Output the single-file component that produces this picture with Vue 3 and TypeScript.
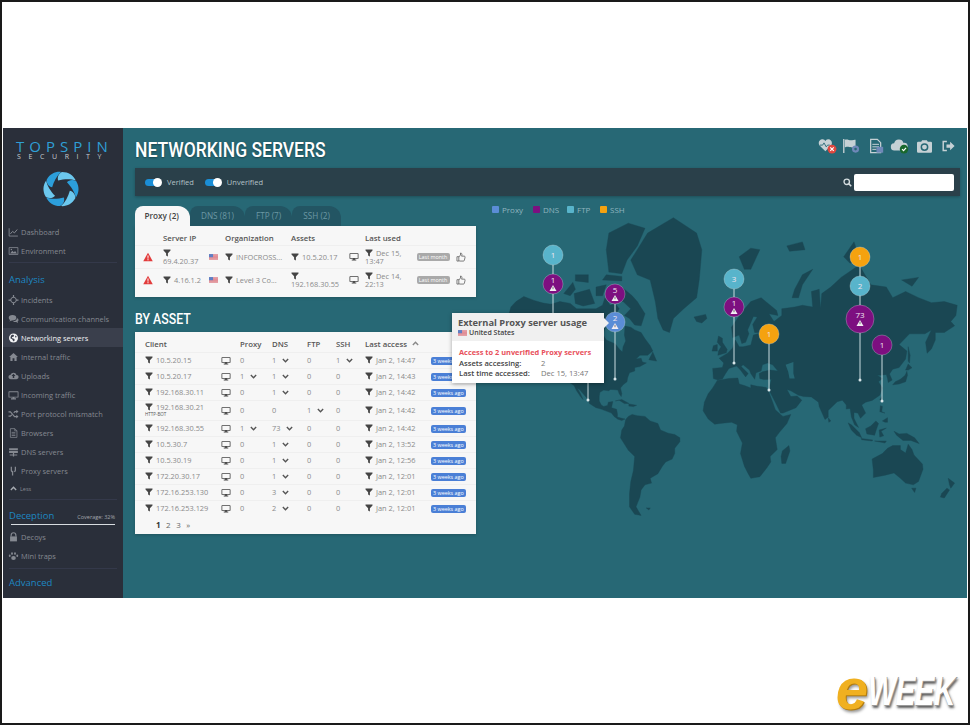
<script setup lang="ts">
// sidebar
const topNav = [
  { label: 'Dashboard', icon: 'chart' },
  { label: 'Environment', icon: 'image' }
]
const analysisNav = [
  { label: 'Incidents', icon: 'target' },
  { label: 'Communication channels', icon: 'comments' },
  { label: 'Networking servers', icon: 'globe', active: true },
  { label: 'Internal traffic', icon: 'home' },
  { label: 'Uploads', icon: 'upload' },
  { label: 'Incoming traffic', icon: 'monitor' },
  { label: 'Port protocol mismatch', icon: 'random' },
  { label: 'Browsers', icon: 'file' },
  { label: 'DNS servers', icon: 'dns' },
  { label: 'Proxy servers', icon: 'fork' }
]
const deceptionNav = [
  { label: 'Decoys', icon: 'lock' },
  { label: 'Mini traps', icon: 'paw' }
]

const tabs = ['Proxy (2)', 'DNS (81)', 'FTP (7)', 'SSH (2)']

const proxyRows = [
  { ip: '69.4.20.37', org: 'INFOCROSS...', asset: '10.5.20.17', used: 'Dec 15, 13:47', wrapIp: true, wrapAsset: false },
  { ip: '4.16.1.2', org: 'Level 3 Co...', asset: '192.168.30.55', used: 'Dec 14, 22:13', wrapIp: false, wrapAsset: true }
]

const assetRows = [
  { ip: '10.5.20.15', proxy: 0, dns: 1, ftp: 0, ssh: 1, time: 'Jan 2, 14:47' },
  { ip: '10.5.20.17', proxy: 1, dns: 1, ftp: 0, ssh: 0, time: 'Jan 2, 14:43' },
  { ip: '192.168.30.11', proxy: 0, dns: 1, ftp: 0, ssh: 0, time: 'Jan 2, 14:42' },
  { ip: '192.168.30.21', tag: 'HTTP-BOT', proxy: 0, dns: 0, ftp: 1, ssh: 0, time: 'Jan 2, 14:42' },
  { ip: '192.168.30.55', proxy: 1, dns: 73, ftp: 0, ssh: 0, time: 'Jan 2, 14:42' },
  { ip: '10.5.30.7', proxy: 0, dns: 1, ftp: 0, ssh: 0, time: 'Jan 2, 13:52' },
  { ip: '10.5.30.19', proxy: 0, dns: 1, ftp: 0, ssh: 0, time: 'Jan 2, 12:56' },
  { ip: '172.20.30.17', proxy: 0, dns: 1, ftp: 0, ssh: 0, time: 'Jan 2, 12:01' },
  { ip: '172.16.253.130', proxy: 0, dns: 3, ftp: 0, ssh: 0, time: 'Jan 2, 12:01' },
  { ip: '172.16.253.129', proxy: 0, dns: 2, ftp: 0, ssh: 0, time: 'Jan 2, 12:01' }
]

const legend = [
  { label: 'Proxy', color: '#5b8dd6', gap: 'w-proxy' },
  { label: 'DNS', color: '#7d0f80', gap: 'w-dns' },
  { label: 'FTP', color: '#58b4cb', gap: 'w-ftp' },
  { label: 'SSH', color: '#f5a20f', gap: 'w-ssh' }
]

// coastlines as lon,lat pairs, projected to page pixels (mercator fitted to the reference)
type Coast = number[][]
const project = (c: Coast) =>
  c
    .map(([lon, lat]) => {
      const y = Math.log(Math.tan(Math.PI / 4 + (lat * Math.PI) / 360))
      return `${(725 + 1.29 * lon).toFixed(1)},${(430 - 74 * y).toFixed(1)}`
    })
    .join(' ')

const coasts: Coast[] = [
  // north america
  [[-168,65.5],[-166,68.5],[-162,70],[-156,71.3],[-148,70.3],[-141,69.6],[-135,69.3],[-128,70],[-120,69.5],[-115,68],[-108,68],[-100,68],[-95,69],[-93,71],[-89,69],[-85,69.5],[-82,68],[-87,65],[-93,62],[-94.5,59],[-92,57],[-85,55.3],[-82,53],[-79.5,51.5],[-79,54],[-77,56.5],[-78,59],[-77.5,62.4],[-73,62],[-70,61],[-65,60],[-62,57.5],[-58,54.5],[-56,52],[-60,50],[-66,50],[-69,48],[-65,48.5],[-64,46.5],[-61,46],[-66,44],[-70,43.5],[-70,41.5],[-74,40.5],[-75.5,37.5],[-76,35],[-79,33],[-81,31],[-80,27],[-80.5,25],[-82,27],[-83,29.5],[-85,29.7],[-89,30],[-90,29],[-94,29.5],[-97,28],[-97.5,25],[-97.5,22],[-96,19],[-94,18],[-91,18.7],[-90.5,21],[-87,21.5],[-88,17],[-84,15.8],[-83.3,12],[-83.5,10],[-80,9],[-77.5,8.5],[-80,7.3],[-83,8.3],[-86,10.5],[-88,13],[-92,14.5],[-96,16],[-100,17],[-105,20],[-106,23],[-109,26],[-112.5,29.5],[-114.5,31],[-112,27],[-110,23],[-112,25],[-115,29],[-117,32.5],[-120.5,34.5],[-122.5,37.5],[-124,40.5],[-124,46],[-123,49],[-128,52],[-131,55],[-135,58.5],[-140,60],[-146,60.8],[-151,60],[-154,58],[-160,55.5],[-163,55],[-158,58.5],[-162,59],[-165,61],[-165,63.5],[-161,64.5]],
  // canadian arctic, newfoundland, caribbean
  [[-80,73.5],[-72,71.5],[-68,70],[-62,66.5],[-65,62.5],[-70,62.8],[-74,65],[-78,66],[-73,68],[-79,70],[-88,70.5],[-90,73]],
  [[-117,72],[-105,73],[-101,69.5],[-110,68.8],[-116,69.5]],
  [[-125,72],[-118,74.5],[-116,73],[-120,71.5]],
  [[-90,76.5],[-80,76.2],[-76,78.5],[-68,80.5],[-62,82.5],[-75,83],[-90,82],[-92,80]],
  [[-95,75],[-80,74.8],[-80,75.7],[-92,76]],
  [[-116,76],[-106,76],[-106,74.5],[-116,74.8]],
  [[-100,73.5],[-92,74],[-95,71.5],[-100,71.5]],
  [[-87,65],[-80.5,64],[-84,62.5]],
  [[-59,47.7],[-56,51.5],[-53,47]],
  [[-85,22],[-80,23],[-74.5,20.2],[-78,20],[-82,22.5]],
  [[-74.5,19.8],[-68.5,18.8],[-71,17.8],[-74.5,18.2]],
  // greenland
  [[-73,78.5],[-68,80],[-60,82],[-40,83.5],[-22,82],[-18,80],[-20,75],[-22,71],[-32,68],[-40,65],[-43,60],[-48,61],[-52,65],[-54,70],[-58,75],[-68,76]],
  // south america
  [[-72,12],[-68,11],[-62,10.5],[-58,7],[-52,5],[-50,0],[-44,-2.5],[-39,-3.5],[-35,-6],[-35,-9],[-39,-14],[-39,-18],[-41,-22],[-46,-24],[-48.5,-27],[-52,-32],[-58,-35],[-57,-38],[-62,-39],[-65,-42],[-66,-46],[-69,-51],[-65,-55],[-70,-54.5],[-74,-51],[-74,-44],[-73,-37],[-71,-30],[-70,-20],[-75,-15.5],[-81,-6],[-80,0],[-78,3],[-77,8],[-75,10.5]],
  [[-61,-51.5],[-58,-51.5],[-59,-52.5]],
  // africa
  [[-6,35.8],[3,37],[10,37.3],[11,33.5],[15,32.5],[20,31],[20,33],[25,32],[32,31.3],[34,28],[37,21],[39,15.5],[43,12],[45,10.5],[51,12],[48,5],[42,-2],[39,-6],[40.5,-15],[35,-20],[35.5,-24],[32.5,-28],[27,-34],[20,-35],[18,-32],[15,-27],[12,-18],[13.5,-10],[9,-1],[9.5,4],[5,6],[-4,5],[-8,4.5],[-13,8.5],[-17,14.7],[-16,21],[-13,27],[-9.5,31]],
  [[49.5,-12],[50.3,-16],[47,-25],[44,-25],[43.5,-20],[44.5,-16]],
  // eurasia
  [[-9,37],[-9.5,43],[-2,43.5],[-1,46],[-4.5,48.5],[2,51],[6,53.5],[8,57],[11,54],[14,54],[20,54.8],[22,59],[29,60],[23,60],[21.5,63],[25,65.5],[22,65.7],[17.5,61],[18.5,59.5],[16,56],[13,55.5],[11,59],[6,58],[5,62],[13,67],[20,70],[28,71],[40,67.5],[41,66],[34,66.5],[38,64],[44,66],[44,68],[54,68.5],[60,69],[68,68.5],[67,72.5],[73,73],[74,68],[75,72],[82,73.5],[90,75.5],[104,77.7],[113,74],[125,73.5],[130,71],[140,72.5],[150,71],[160,69.7],[170,70],[180,69],[179,66],[175,64],[178,62.5],[170,60],[163,60],[163,57],[160,53],[156.7,51],[155.5,56],[160,61],[155,59.5],[143,59.5],[135,55],[141,52],[140,48],[135,43.5],[130,42.5],[127.5,39.7],[129.5,36],[126.5,34.5],[126,37],[125,39.5],[121,39],[118,39],[122,37],[119,35],[122,31],[120,26],[114,22.3],[109,21],[106,19],[109,13],[105,9],[103,13],[100,13.5],[100,9],[103.5,2],[100.5,4],[98,10],[97,16.5],[94,16],[94,19],[91,22.5],[87,21.3],[80,15],[80,10],[77.5,8],[73,18],[72.5,21],[67,24.8],[61,25],[57,26],[51,29],[48,30],[51,25],[56,25.5],[59.5,22.5],[55,17],[45,13],[43,13],[39,21],[35,28],[34.5,31.5],[36,36.5],[30,36.3],[27,37],[26.5,40],[29,41],[35,42],[41,41.5],[37,45],[33,46],[29,45],[28,41.5],[24,40.5],[23,36.5],[20,40],[19,42],[14,45],[12.5,44],[18,40],[16,38],[12,42],[9,44.3],[3,43],[0,39.5],[-2,36.7],[-5.5,36]],
  // europe and arctic islands
  [[-5.5,50],[1,51.2],[1.7,52.7],[-2,56],[-2,57.7],[-5,58.6],[-6,56],[-3,54],[-5,52]],
  [[-10,52],[-6,52],[-6,55],[-9,54.5]],
  [[-24,65.5],[-15,66.3],[-14,65],[-18,63.5],[-22,64]],
  [[11,79],[20,80.2],[27,80],[20,77],[15,77]],
  [[52,71],[57,71],[60,74],[68,77],[60,76],[54,73]],
  [[48,80.5],[60,81],[62,80],[50,79.8]],
  [[92,79],[100,81],[104,79],[97,78]],
  [[137,75],[150,75.5],[145,73.7]],
  // east asia
  [[142,54],[143.5,50],[143,46],[142,47],[142,51]],
  [[130,33],[135,33.5],[140,35],[141.5,39],[141,41.3],[139.7,39],[136,36.5],[132,35]],
  [[140,42],[142,45.4],[145,43.3],[142,42]],
  [[120,23],[121.5,25],[121,22]],
  [[80,9.5],[82,7],[80.5,6]],
  [[120.5,18.5],[122,18],[121.5,14],[124,13],[120,14]],
  [[122,7],[126,9.5],[126,6],[124,6]],
  // indonesia and new guinea
  [[95.5,5.5],[98,4],[104,-2],[106,-6],[102,-4],[98,0]],
  [[105.5,-6.5],[114.5,-7.7],[114,-8.5],[106,-7.5]],
  [[109,1],[113,3],[117,7],[119,5],[117.5,1],[116,-4],[110,-3]],
  [[119.5,0],[125,1.5],[121,-1],[123,-4.5],[120,-5.5]],
  [[131,-1],[135,-3],[141,-2.6],[147,-6],[150.5,-10.5],[144,-8],[138,-8],[133,-4]],
  [[116,-8.5],[125,-8.5],[124,-10]],
  // australia and new zealand
  [[114,-22],[122,-18],[126,-14],[130,-12],[136,-12],[136,-15],[140,-17.5],[142,-11],[145,-15],[146.5,-19],[153,-25.5],[153.5,-29],[150,-37],[146,-39],[140,-38],[136,-35],[131,-31.5],[124,-33],[115,-34.5],[115,-30]],
  [[144.7,-41],[148,-41],[147,-43.5]],
  [[173,-35],[178,-38],[175,-41],[174,-39]],
  [[172,-41],[174,-42],[170,-46.5],[167,-46],[168,-44]]
]
const land = coasts.map(project)
const caspian = project([[47,45],[53,46.5],[53,40],[54,37],[50,37],[49,41]])

interface Pin { x: number; y: number; r: number; n: number; color: string; warn: boolean }
const pins: Pin[] = [
  { x: 553, y: 255, r: 10, n: 1, color: '#58b4cb', warn: false },
  { x: 553, y: 284, r: 10, n: 1, color: '#7d0f80', warn: true },
  { x: 615, y: 294, r: 10, n: 5, color: '#7d0f80', warn: true },
  { x: 615, y: 322, r: 10, n: 2, color: '#5b8dd6', warn: true },
  { x: 734, y: 279, r: 10, n: 3, color: '#58b4cb', warn: false },
  { x: 734, y: 307, r: 10, n: 1, color: '#7d0f80', warn: true },
  { x: 769, y: 334, r: 10, n: 1, color: '#f5a20f', warn: false },
  { x: 860, y: 257, r: 10, n: 1, color: '#f5a20f', warn: false },
  { x: 860, y: 286, r: 10, n: 2, color: '#58b4cb', warn: false },
  { x: 860, y: 319, r: 14, n: 73, color: '#7d0f80', warn: true },
  { x: 882, y: 345, r: 10, n: 1, color: '#7d0f80', warn: false }
]
const stems = [
  { x: 553, y1: 265, y2: 320 },
  { x: 588, y1: 320, y2: 400 },
  { x: 615, y1: 304, y2: 379 },
  { x: 734, y1: 289, y2: 363 },
  { x: 769, y1: 344, y2: 390 },
  { x: 860, y1: 267, y2: 380 },
  { x: 882, y1: 355, y2: 401 }
]
</script>

<template>
  <div class="page">
    <svg class="defs" width="0" height="0">
      <defs>
        <symbol id="i-filter" viewBox="0 0 16 16"><path d="M1 1h14v2.2L9.8 8.6V15L6.2 13V8.6L1 3.2z" /></symbol>
        <symbol id="i-monitor" viewBox="0 0 16 16"><path d="M1 2h14a1 1 0 0 1 1 1v8a1 1 0 0 1-1 1H9.5v1.3H12V15H4v-1.7h2.5V12H1a1 1 0 0 1-1-1V3a1 1 0 0 1 1-1zm.4 1.4v7.2h13.2V3.4z" fill-rule="evenodd" /></symbol>
        <symbol id="i-warn" viewBox="0 0 16 16"><path d="M8 1l7.6 13.6H.4z" /><path d="M7.1 5.6h1.8l-.3 5H7.4zM7.1 11.4h1.8v1.6H7.1z" fill="#fff" /></symbol>
        <symbol id="i-thumb" viewBox="0 0 16 16"><path d="M1.5 7.5h3v7h-3zM4.5 8l2.7-3.2V1.6c1.6 0 2.3 1 2.3 2.4 0 .9-.3 1.7-.6 2.6h4.3c1 0 1.5.8 1.3 1.7l-1.1 4.9c-.2.8-.7 1.3-1.6 1.3H6.5c-.8 0-1.3-.3-2-.8" fill="none" stroke="currentColor" stroke-width="1.2" /></symbol>
        <symbol id="i-chevron" viewBox="0 0 10 10"><path d="M1.2 3l3.8 3.8L8.8 3" fill="none" stroke="currentColor" stroke-width="2" /></symbol>
        <symbol id="i-chart" viewBox="0 0 16 16"><path d="M1 2v12.5h14" fill="none" stroke="currentColor" stroke-width="1.4" /><path d="M3 11l3.5-4 3 2.4L14 4" fill="none" stroke="currentColor" stroke-width="1.6" /></symbol>
        <symbol id="i-image" viewBox="0 0 16 16"><path d="M1 2.5h14v11H1z" fill="none" stroke="currentColor" stroke-width="1.3" /><path d="M2.5 12l3.5-4.5 2.5 2.5 2-2 3 4z" /><circle cx="4.6" cy="5.4" r="1.2" /></symbol>
        <symbol id="i-target" viewBox="0 0 16 16"><circle cx="8" cy="8" r="4.4" fill="none" stroke="currentColor" stroke-width="1.6" /><path d="M7 0h2v4H7zM7 12h2v4H7zM0 7h4v2H0zM12 7h4v2h-4z" /></symbol>
        <symbol id="i-comments" viewBox="0 0 16 16"><ellipse cx="6.4" cy="6" rx="6" ry="4.3" /><path d="M3 9l-1.6 3L6 10z" /><path d="M13.4 6.2c1.6.7 2.6 1.9 2.6 3.2 0 1-.6 1.9-1.5 2.6l1 2.4-3.2-1.6c-2 .3-4-.2-5.2-1.4 3.5 0 6.8-2 6.3-5.2z" /></symbol>
        <symbol id="i-globe" viewBox="0 0 16 16"><circle cx="8" cy="8" r="7.2" /><path d="M4 4l3-1.5 2 1.5-1 2-2.5.5.5 2 3 .5 1 2-1.5 2.5L7 12l-1-2-3-1.5z" fill="#3a3f4c" /><path d="M11 4l2 1.5-1 2-1.5-1z" fill="#3a3f4c" /></symbol>
        <symbol id="i-home" viewBox="0 0 16 16"><path d="M8 1.5L1 8h2v6.5h3.5V10h3v4.5H13V8h2z" /></symbol>
        <symbol id="i-upload" viewBox="0 0 16 16"><path d="M12.8 6.2A5 5 0 0 0 3.3 6 3.6 3.6 0 0 0 3.6 13.2h9a3.5 3.5 0 0 0 .2-7zM8 4.5l3.2 3.4H9.2v3.3H6.8V7.9H4.8z" fill-rule="evenodd" /></symbol>
        <symbol id="i-random" viewBox="0 0 16 16"><path d="M0 3.5h3.5L10 11h2.5V9l3.5 3-3.5 3v-2H9.2L2.8 5.5H0zM12.5 1l3.5 3-3.5 3V5H10.6L9 6.9 7.8 5.5 9.8 3h2.7zM0 10.5h2.8l1.8-2 1.2 1.4L3.5 12.5H0z" /></symbol>
        <symbol id="i-file" viewBox="0 0 16 16"><path d="M3 1h7l3.5 3.5V15H3z M10 1v3.5h3.5 M5 7h6 M5 9.5h6 M5 12h6" fill="none" stroke="currentColor" stroke-width="1.2" /></symbol>
        <symbol id="i-dns" viewBox="0 0 16 16"><path d="M1 2h14v3H1zM1 6.5h14v3H1zM7 9.5h2V12h5v1.5H9V15H7v-1.5H2V12h5z" /></symbol>
        <symbol id="i-fork" viewBox="0 0 16 16"><path d="M3.5 1h2v5.5c0 1 .6 1.5 1.5 1.5h.5V15h-2V9.8c-1.2-.3-2-1.5-2-3zM10 1h2v5.8c0 1.3-.7 2.5-2 3L8.5 8.2c1-.3 1.5-.7 1.5-1.7z" /></symbol>
        <symbol id="i-lock" viewBox="0 0 16 16"><path d="M4.2 7V5a3.8 3.8 0 0 1 7.6 0v2" fill="none" stroke="currentColor" stroke-width="1.8" /><path d="M2.5 7h11v8h-11z" /></symbol>
        <symbol id="i-paw" viewBox="0 0 16 16"><ellipse cx="8" cy="11.3" rx="3.7" ry="3.2" /><ellipse cx="5.6" cy="4" rx="1.5" ry="2.2" /><ellipse cx="10.4" cy="4" rx="1.5" ry="2.2" /><ellipse cx="2" cy="7.5" rx="1.5" ry="2" /><ellipse cx="14" cy="7.5" rx="1.5" ry="2" /></symbol>
        <symbol id="i-flag" viewBox="0 0 20 13">
          <rect width="20" height="13" fill="#e8b4b8" />
          <path d="M0 2h20M0 5h20M0 8h20M0 11h20" stroke="#d9606e" stroke-width="1.2" />
          <rect width="9" height="7" fill="#5f7fc4" />
        </symbol>
      </defs>
    </svg>

    <div class="app">
      <aside class="sidebar">
        <div class="logo-text">TOPSPIN</div>
        <div class="logo-sub">SECURITY</div>
        <svg class="swirl" viewBox="-20 -20 40 40">
          <path v-for="a in [0, 60, 120, 180, 240, 300]" :key="a" :transform="`rotate(${a})`" :fill="a % 120 === 0 ? '#6cc8ee' : '#2c9fdb'" d="M-3-9C3-10.5 10-11 15.6-9 13-14.5 8-18 1-18-3-16-4-12-3-9z" />
        </svg>

        <nav class="nav first">
          <div v-for="item in topNav" :key="item.label" class="nav-item">
            <svg class="nav-icon"><use :href="`#i-${item.icon}`" /></svg>{{ item.label }}
          </div>
        </nav>
        <div class="rule"></div>
        <div class="section">Analysis</div>
        <nav class="nav">
          <div v-for="item in analysisNav" :key="item.label" class="nav-item" :class="{ active: item.active }">
            <svg class="nav-icon"><use :href="`#i-${item.icon}`" /></svg>{{ item.label }}
          </div>
          <div class="less"><svg class="less-icon"><use href="#i-chevron" /></svg>Less</div>
        </nav>
        <div class="rule"></div>
        <div class="section deception">
          <span>Deception</span><small>Coverage: 32%</small>
        </div>
        <div class="coverage"></div>
        <nav class="nav">
          <div v-for="item in deceptionNav" :key="item.label" class="nav-item">
            <svg class="nav-icon"><use :href="`#i-${item.icon}`" /></svg>{{ item.label }}
          </div>
        </nav>
        <div class="rule low"></div>
        <div class="section advanced">Advanced</div>
      </aside>

      <main class="main">
        <svg class="map" viewBox="123 128 845 470" width="845" height="470">
          <polygon v-for="(p, i) in land" :key="i" :points="p" fill="#1a4753" stroke="#1a4753" stroke-width=".4" />
          <polygon :points="caspian" fill="#276875" />
          <g v-for="s in stems" :key="s.x">
            <line :x1="s.x" :x2="s.x" :y1="s.y1" :y2="s.y2" stroke="#c9dde1" stroke-width="1" />
            <circle :cx="s.x" :cy="s.y2" r="1.5" fill="#d8e6e9" />
          </g>
          <g v-for="(pin, i) in pins" :key="i">
            <circle :cx="pin.x" :cy="pin.y" :r="pin.r" :fill="pin.color" stroke="#ffffff" stroke-opacity=".25" />
            <text class="pin-num" :x="pin.x" :y="pin.warn ? pin.y - 1 : pin.y + 3">{{ pin.n }}</text>
            <g v-if="pin.warn" :transform="`translate(${pin.x - 3.5} ${pin.y + 1})`">
              <path d="M3.5 0l3.5 6H0z" fill="#f4eef4" />
              <path d="M3.5 1.8v2.4" stroke="#555" stroke-width=".8" />
            </g>
          </g>
        </svg>

        <header class="title-row">
          <h1>NETWORKING SERVERS</h1>
          <div class="top-icons">
            <svg viewBox="0 0 22 18" width="20" height="16">
              <path d="M8 15L1.5 8.5C-1 5 2 1 5 1.5c1.5.2 2.5 1 3 2 .6-1 1.6-1.8 3-2 3-.5 6 3.5 3.5 7z" fill="#c6d1d5" />
              <path d="M2 8h3l1.5-2.5L9 10l1.5-2H13" fill="none" stroke="#276875" stroke-width="1" />
              <circle cx="15.5" cy="12.5" r="5" fill="#e0483f" />
              <path d="M13.5 10.5l4 4m0-4l-4 4" stroke="#fff" stroke-width="1.3" />
            </svg>
            <svg viewBox="0 0 22 18" width="20" height="16">
              <path d="M1 1h1.5v16H1zM3 2c3-1 5 1 8 .5S15 2 15 2v8c-3 1-4 .5-7 0s-4 0-5 .5z" fill="#c6d1d5" />
              <circle cx="15" cy="12.5" r="4" fill="#6f88b8" />
              <circle cx="15" cy="12.5" r="1.5" fill="#276875" />
            </svg>
            <svg viewBox="0 0 18 18" width="15" height="16">
              <path d="M2 1h8l4 4v12H2z" fill="none" stroke="#c6d1d5" stroke-width="1.5" />
              <path d="M4 7h8M4 10h8M4 13h5" stroke="#c6d1d5" stroke-width="1.2" />
              <rect x="9" y="10" width="8" height="7" fill="#6f88b8" />
            </svg>
            <svg viewBox="0 0 22 18" width="20" height="16">
              <path d="M5 14a4 4 0 0 1-.6-8A5.5 5.5 0 0 1 15 5.5a4.2 4.2 0 0 1 1 8.5z" fill="#c6d1d5" />
              <circle cx="15.5" cy="12.5" r="4.8" fill="#19682c" />
              <path d="M13.3 12.5l1.7 1.8 2.8-3.3" fill="none" stroke="#fff" stroke-width="1.3" />
            </svg>
            <svg viewBox="0 0 18 16" width="15" height="14">
              <path d="M1.5 3H5l1.2-2h5.6L13 3h3.5A1.5 1.5 0 0 1 18 4.5V14.5A1.5 1.5 0 0 1 16.5 16h-15A1.5 1.5 0 0 1 0 14.5V4.5A1.5 1.5 0 0 1 1.5 3z" fill="#c6d1d5" />
              <circle cx="9" cy="9.3" r="3.8" fill="none" stroke="#276875" stroke-width="1.8" />
            </svg>
            <svg viewBox="0 0 16 14" width="13" height="12">
              <path d="M6 1.5H1.5v11H6" fill="none" stroke="#c6d1d5" stroke-width="1.8" />
              <path d="M5.5 5H10V1.8L15.5 7 10 12.2V9H5.5z" fill="#c6d1d5" />
            </svg>
          </div>
        </header>

        <div class="toolbar">
          <span class="toggle"><i></i></span><span class="toggle-label">Verified</span>
          <span class="toggle"><i></i></span><span class="toggle-label">Unverified</span>
          <svg class="search" viewBox="0 0 12 12" width="9" height="9">
            <circle cx="5" cy="5" r="3.6" fill="none" stroke="#d5dde0" stroke-width="1.8" />
            <path d="M7.5 7.5L11 11" stroke="#d5dde0" stroke-width="2" />
          </svg>
          <input class="search-box" type="text" />
        </div>

        <div class="panels">
          <section class="left">
            <div class="tabs">
              <div v-for="(tab, i) in tabs" :key="tab" class="tab" :class="{ on: i === 0 }">{{ tab }}</div>
            </div>
            <div class="card proxy-card">
              <table class="proxy">
                <colgroup>
                  <col style="width: 25px" /><col style="width: 45px" /><col style="width: 17px" /><col style="width: 66px" />
                  <col style="width: 58px" /><col style="width: 16px" /><col style="width: 50px" /><col style="width: 42px" /><col />
                </colgroup>
                <thead>
                  <tr>
                    <th></th><th>Server IP</th><th></th><th>Organization</th><th>Assets</th><th></th><th>Last used</th><th></th><th></th>
                  </tr>
                </thead>
                <tbody>
                  <tr v-for="row in proxyRows" :key="row.ip">
                    <td class="center"><svg class="warn"><use href="#i-warn" /></svg></td>
                    <td>
                      <svg class="filter"><use href="#i-filter" /></svg><br v-if="row.wrapIp" />{{ row.ip }}
                    </td>
                    <td class="center"><svg class="flag"><use href="#i-flag" /></svg></td>
                    <td class="nowrap"><svg class="filter"><use href="#i-filter" /></svg>{{ row.org }}</td>
                    <td>
                      <svg class="filter"><use href="#i-filter" /></svg><br v-if="row.wrapAsset" />{{ row.asset }}
                    </td>
                    <td class="center"><svg class="monitor"><use href="#i-monitor" /></svg></td>
                    <td><svg class="filter"><use href="#i-filter" /></svg>{{ row.used }}</td>
                    <td class="center"><span class="badge grey">Last month</span></td>
                    <td class="center thumb-cell"><svg class="thumb"><use href="#i-thumb" /></svg></td>
                  </tr>
                </tbody>
              </table>
            </div>

            <h2>BY ASSET</h2>
            <div class="card asset-card">
              <table class="asset">
                <colgroup>
                  <col style="width: 79px" /><col style="width: 23px" /><col style="width: 32px" /><col style="width: 35px" />
                  <col style="width: 29px" /><col style="width: 29px" /><col style="width: 66px" /><col />
                </colgroup>
                <thead>
                  <tr>
                    <th class="pad">Client</th><th></th><th>Proxy</th><th>DNS</th><th>FTP</th><th>SSH</th>
                    <th colspan="2">Last access <svg class="up"><use href="#i-chevron" /></svg></th>
                  </tr>
                </thead>
                <tbody>
                  <tr v-for="row in assetRows" :key="row.ip" :class="{ tall: row.tag }">
                    <td class="pad client">
                      <svg class="filter"><use href="#i-filter" /></svg>{{ row.ip }}
                      <div v-if="row.tag" class="tag">{{ row.tag }}</div>
                    </td>
                    <td class="center"><svg class="monitor"><use href="#i-monitor" /></svg></td>
                    <td>{{ row.proxy }}<svg v-if="row.proxy" class="chev"><use href="#i-chevron" /></svg></td>
                    <td>{{ row.dns }}<svg v-if="row.dns" class="chev"><use href="#i-chevron" /></svg></td>
                    <td>{{ row.ftp }}<svg v-if="row.ftp" class="chev"><use href="#i-chevron" /></svg></td>
                    <td>{{ row.ssh }}<svg v-if="row.ssh" class="chev"><use href="#i-chevron" /></svg></td>
                    <td class="nowrap"><svg class="filter"><use href="#i-filter" /></svg>{{ row.time }}</td>
                    <td><span class="badge blue">3 weeks ago</span></td>
                  </tr>
                </tbody>
              </table>
              <div class="pager"><b>1</b><span>2</span><span>3</span><span>»</span></div>
            </div>
          </section>

          <section class="right">
            <div class="legend">
              <span v-for="l in legend" :key="l.label" class="legend-item" :class="l.gap">
                <i :style="{ background: l.color }"></i>{{ l.label }}
              </span>
            </div>
          </section>
        </div>

        <div class="tooltip">
          <div class="tt-head">
            <div class="tt-title">External Proxy server usage</div>
            <div class="tt-country"><svg class="flag"><use href="#i-flag" /></svg>United States</div>
          </div>
          <div class="tt-body">
            <div class="tt-alert">Access to 2 unverified Proxy servers</div>
            <div class="tt-row"><b>Assets accessing:</b><span>2</span></div>
            <div class="tt-row"><b>Last time accessed:</b><span>Dec 15, 13:47</span></div>
          </div>
        </div>
      </main>
    </div>

    <footer class="foot">
      <div class="eweek"><span class="e">e</span><span class="week">WEEK</span></div>
    </footer>
  </div>
</template>

<style>
html,
body {
  margin: 0;
  background: #fff;
}
</style>

<style scoped>
.page {
  width: 970px;
  height: 725px;
  box-sizing: border-box;
  border: 2px solid #1a1a1a;
  padding: 126px 0 0 1px;
  background: #fff;
  font-family: "Open Sans", "Liberation Sans", sans-serif;
  overflow: hidden;
  display: flex;
  flex-direction: column;
}

.defs {
  position: absolute;
}

.app {
  display: flex;
  height: 470px;
  width: 964px;
  flex-shrink: 0;
}

/* sidebar */
.sidebar {
  width: 120px;
  flex-shrink: 0;
  background: #2a2f3a;
  color: #858991;
  font-size: 7.45px;
  display: flex;
  flex-direction: column;
}

.logo-text {
  margin: 9px 0 0 13px;
  font-size: 15px;
  line-height: 18px;
  letter-spacing: 5px;
  color: #2f9fd6;
  white-space: nowrap;
}

.logo-sub {
  margin: -3px 0 0 14px;
  font-size: 7px;
  line-height: 9px;
  letter-spacing: 7.6px;
  color: #c8ccd0;
  white-space: nowrap;
}

.swirl {
  width: 38px;
  height: 38px;
  margin: 9px 0 0 39px;
  flex-shrink: 0;
}

.nav {
  display: flex;
  flex-direction: column;
}

.nav.first {
  margin-top: 14px;
}

.nav-item {
  height: 19px;
  flex-shrink: 0;
  display: flex;
  align-items: center;
  padding-left: 5px;
  white-space: nowrap;
}

.nav-item.active {
  background: #3a3f4c;
  color: #f2f3f5;
}

.nav-icon {
  width: 11px;
  height: 10px;
  margin-right: 2px;
  fill: currentColor;
  flex-shrink: 0;
}

.less {
  height: 17px;
  display: flex;
  align-items: center;
  padding-left: 7px;
  font-size: 5.5px;
}

.less-icon {
  width: 7px;
  height: 7px;
  margin-right: 3px;
  transform: rotate(180deg);
  color: #a8acb2;
}

.rule {
  height: 1px;
  background: #34394a;
  margin: 2px 6px 0;
  flex-shrink: 0;
}

.rule.low {
  margin-top: 3px;
}

.section {
  font-size: 9.5px;
  line-height: 16px;
  color: #1d87c2;
  padding: 9px 6px 2px;
}

.deception {
  display: flex;
  justify-content: space-between;
  align-items: baseline;
  padding: 8px 8px 0 6px;
}

.deception small {
  font-size: 5.5px;
  color: #a3a7ad;
}

.coverage {
  height: 1px;
  flex-shrink: 0;
  margin: -1px 8px 2px;
  background: #d8dce0;
}

.advanced {
  padding-top: 6px;
}

/* main area */
.main {
  flex: 1;
  position: relative;
  background: #276875;
  padding: 0 7px 0 12px;
  display: flex;
  flex-direction: column;
  min-width: 0;
  overflow: hidden;
}

.map {
  position: absolute;
  left: 0;
  top: 0;
}

.pin-num {
  font-size: 8px;
  fill: #f0e6f0;
  text-anchor: middle;
  font-family: "Open Sans", sans-serif;
}

.title-row {
  position: relative;
  height: 40px;
  display: flex;
  align-items: center;
  justify-content: space-between;
  flex-shrink: 0;
}

h1 {
  margin: 3px 0 0;
  font-family: Roboto, "Open Sans", sans-serif;
  font-size: 20px;
  font-weight: 500;
  color: #fff;
  white-space: nowrap;
  transform: scaleX(0.875);
  transform-origin: left center;
  text-shadow: 0 1px 2px rgba(0, 0, 0, 0.35);
}

.top-icons {
  display: grid;
  grid-auto-flow: column;
  grid-auto-columns: 24px;
  justify-items: center;
  align-items: center;
  margin-bottom: 4px;
}

.toolbar {
  position: relative;
  height: 28px;
  flex-shrink: 0;
  background: #2a404a;
  box-shadow: 0 1px 3px rgba(0, 0, 0, 0.25);
  display: flex;
  align-items: center;
  padding: 0 6px 0 10px;
  font-size: 7.5px;
  color: #b4c2c7;
}

.toggle {
  width: 16px;
  height: 7px;
  border-radius: 4px;
  background: #1b8ed6;
  position: relative;
}

.toggle i {
  position: absolute;
  right: -1px;
  top: -1px;
  width: 9px;
  height: 9px;
  border-radius: 50%;
  background: #fff;
}

.toggle-label {
  margin: 0 11px 0 6px;
}

.search {
  margin-left: auto;
  margin-right: 2px;
}

.search-box {
  width: 100px;
  height: 17px;
  box-sizing: border-box;
  border: 0;
  border-radius: 2px;
  background: #fff;
  padding: 0;
}

.panels {
  position: relative;
  display: flex;
  flex: 1;
  min-height: 0;
}

.left {
  width: 341px;
  flex-shrink: 0;
  padding-top: 10px;
}

.right {
  flex: 1;
  padding: 9px 0 0 16px;
}

.legend {
  display: flex;
  font-size: 8px;
  color: #8fb4bf;
  line-height: 9px;
}

.legend-item {
  display: flex;
  align-items: center;
}

.legend-item i {
  width: 7px;
  height: 7px;
  margin-right: 3px;
  border-radius: 1px;
}

.w-proxy {
  width: 41px;
}

.w-dns {
  width: 34px;
}

.w-ftp {
  width: 33px;
}

/* tabs and tables */
.tabs {
  display: flex;
  height: 20px;
}

.tab {
  height: 20px;
  line-height: 20px;
  padding: 0 11px;
  font-size: 8.2px;
  white-space: nowrap;
  background: #235563;
  color: #6c98a4;
  border-radius: 8px 12px 0 0;
}

.tab.on {
  width: 55px;
  box-sizing: border-box;
  padding: 0 0 0 9.5px;
  background: #f7f7f7;
  color: #444;
  font-weight: 600;
}

.card {
  background: #f7f7f7;
  box-shadow: 0 1px 3px rgba(0, 0, 0, 0.2);
}

.proxy-card {
  height: 71px;
}

table {
  width: 100%;
  border-collapse: collapse;
  table-layout: fixed;
  font-size: 7.4px;
  color: #8a8a8a;
}

th {
  text-align: left;
  font-weight: 600;
  color: #555;
  font-size: 7.8px;
  padding: 0 0 0 3px;
  white-space: nowrap;
}

td {
  padding: 0 0 0 3px;
  line-height: 8px;
  border-top: 1px solid #efefef;
}

.proxy thead tr {
  height: 19px;
}

.proxy th {
  padding-top: 5px;
}

.proxy tbody tr {
  height: 23px;
}

.nowrap {
  white-space: nowrap;
  overflow: hidden;
}

td.center {
  text-align: center;
  padding: 0;
}

td.thumb-cell {
  padding-right: 8px;
}

.filter {
  width: 8px;
  height: 8px;
  margin-right: 3px;
  fill: #444;
  vertical-align: -1px;
}

.monitor {
  width: 10px;
  height: 9px;
  fill: #444;
  vertical-align: -2px;
}

.warn {
  width: 10px;
  height: 10px;
  fill: #e23b3b;
  vertical-align: middle;
}

.flag {
  width: 9px;
  height: 6px;
  vertical-align: 0;
}

.thumb {
  width: 10px;
  height: 10px;
  color: #555;
  vertical-align: middle;
}

.badge {
  display: inline-block;
  color: #fff;
  font-size: 5.4px;
  line-height: 8px;
  padding: 0 2px;
  border-radius: 2px;
  white-space: nowrap;
}

.grey {
  background: #a9a9a9;
  width: 33px;
  box-sizing: border-box;
  text-align: center;
  padding: 0;
}

.blue {
  background: #4a7fd6;
}

h2 {
  margin: 15px 0 5px;
  font-family: Roboto, "Open Sans", sans-serif;
  font-size: 14.5px;
  line-height: 15px;
  font-weight: 500;
  color: #fff;
  transform: scaleX(0.85);
  transform-origin: left center;
}

.asset-card {
  height: 202px;
}

.asset thead tr {
  height: 20px;
}

.asset th {
  padding-top: 4px;
}

.asset tbody tr {
  height: 16px;
}

.asset tbody tr.tall {
  height: 20px;
}

td.pad,
th.pad {
  padding-left: 10px;
}

.client {
  white-space: nowrap;
  overflow: hidden;
}

.tag {
  font-size: 4.5px;
  line-height: 5px;
  margin-top: 1px;
  color: #555;
}

.chev {
  width: 7px;
  height: 7px;
  margin-left: 6px;
  color: #555;
  vertical-align: -1px;
}

.up {
  width: 7px;
  height: 7px;
  margin-left: 3px;
  transform: rotate(180deg);
  color: #888;
}

.pager {
  display: flex;
  gap: 5.5px;
  padding: 3px 0 0 21px;
  font-size: 8px;
  color: #666;
}

.pager b {
  color: #333;
}

/* tooltip over the map */
.tooltip {
  position: absolute;
  left: 329px;
  top: 185px;
  width: 152px;
  height: 70px;
  background: #fff;
  box-shadow: 0 1px 4px rgba(0, 0, 0, 0.35);
  color: #444;
}

.tooltip::after {
  content: "";
  position: absolute;
  right: -5px;
  top: 5px;
  border: 5px solid transparent;
  border-left-color: #f0f0f0;
  border-right-width: 0;
}

.tt-head {
  background: #f0f0f0;
  height: 28px;
  box-sizing: border-box;
  padding: 4px 0 0 6px;
}

.tt-title {
  font-size: 9.3px;
  line-height: 11px;
  font-weight: 700;
  color: #555;
  white-space: nowrap;
}

.tt-country {
  font-size: 7px;
  line-height: 7px;
  margin-top: 1px;
  font-weight: 600;
  display: flex;
  align-items: center;
  gap: 2px;
}

.tt-body {
  padding: 6px 0 0 7px;
  font-size: 7.6px;
  line-height: 10.5px;
}

.tt-alert {
  color: #e8505b;
  font-weight: 700;
  font-size: 7.4px;
  white-space: nowrap;
}

.tt-row {
  display: flex;
}

.tt-row b {
  width: 82px;
  font-weight: 600;
  white-space: nowrap;
}

.tt-row span {
  color: #777;
}

/* footer logo */
.foot {
  flex: 1;
  display: flex;
  justify-content: flex-end;
  align-items: flex-start;
  padding: 70px 13px 0 0;
}

.eweek {
  display: flex;
  align-items: baseline;
  font-family: "Liberation Sans", sans-serif;
  font-weight: 700;
  font-style: italic;
  line-height: 34px;
}

.e {
  font-size: 58px;
  color: #f0b020;
  transform: translateY(4px);
  text-shadow: 1px 1px 0 #b27c10, 2px 3px 3px rgba(0, 0, 0, 0.4);
}

.week {
  font-size: 42px;
  letter-spacing: -1px;
  margin-right: -35px;
  color: #fff;
  transform: scaleX(0.71);
  transform-origin: left bottom;
  text-shadow: 1px 1px 0 #999, 2px 3px 3px rgba(0, 0, 0, 0.65);
}
</style>
